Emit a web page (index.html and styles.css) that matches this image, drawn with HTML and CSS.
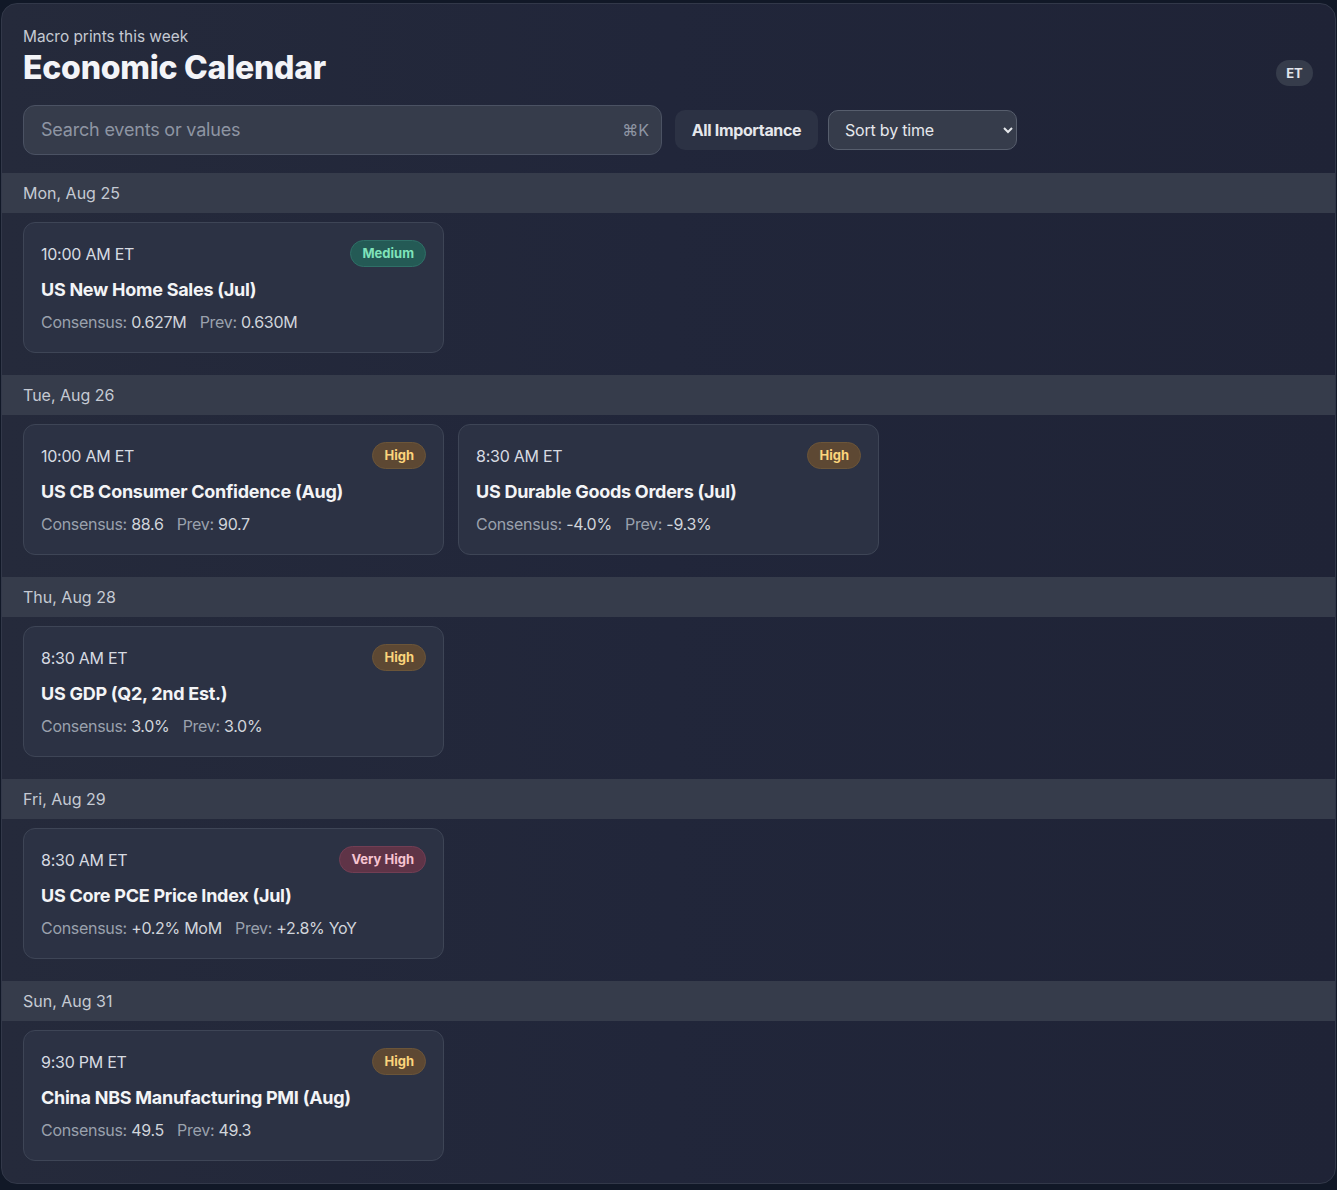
FILE: index.html
```html
<!DOCTYPE html>
<html lang="en">
<head>
<meta charset="utf-8">
<title>Economic Calendar</title>
<link rel="stylesheet" href="styles.css">
</head>
<body>
<div class="page">
  <main class="panel">
    <header class="head">
      <div class="titles">
        <div class="eyebrow">Macro prints this week</div>
        <h1 class="title">Economic Calendar</h1>
      </div>
      <span class="tz">ET</span>
    </header>
    <div class="toolbar">
      <label class="search">
        <input class="search-input" type="text" placeholder="Search events or values">
        <span class="kbd">⌘K</span>
      </label>
      <button class="btn">All Importance</button>
      <select class="sort">
        <option>Sort by time</option>
      </select>
    </div>

    <section class="day">
      <div class="day-head">Mon, Aug 25</div>
      <div class="cards">
        <article class="card">
          <div class="row"><span class="time">10:00 AM ET</span><span class="badge medium">Medium</span></div>
          <div class="name">US New Home Sales (Jul)</div>
          <div class="meta"><span class="lbl">Consensus:</span> 0.627M <span class="lbl sp">Prev:</span> 0.630M</div>
        </article>
      </div>
    </section>

    <section class="day">
      <div class="day-head">Tue, Aug 26</div>
      <div class="cards">
        <article class="card">
          <div class="row"><span class="time">10:00 AM ET</span><span class="badge high">High</span></div>
          <div class="name">US CB Consumer Confidence (Aug)</div>
          <div class="meta"><span class="lbl">Consensus:</span> 88.6 <span class="lbl sp">Prev:</span> 90.7</div>
        </article>
        <article class="card">
          <div class="row"><span class="time">8:30 AM ET</span><span class="badge high">High</span></div>
          <div class="name">US Durable Goods Orders (Jul)</div>
          <div class="meta"><span class="lbl">Consensus:</span> -4.0% <span class="lbl sp">Prev:</span> -9.3%</div>
        </article>
      </div>
    </section>

    <section class="day">
      <div class="day-head">Thu, Aug 28</div>
      <div class="cards">
        <article class="card">
          <div class="row"><span class="time">8:30 AM ET</span><span class="badge high">High</span></div>
          <div class="name">US GDP (Q2, 2nd Est.)</div>
          <div class="meta"><span class="lbl">Consensus:</span> 3.0% <span class="lbl sp">Prev:</span> 3.0%</div>
        </article>
      </div>
    </section>

    <section class="day">
      <div class="day-head">Fri, Aug 29</div>
      <div class="cards">
        <article class="card">
          <div class="row"><span class="time">8:30 AM ET</span><span class="badge vhigh">Very High</span></div>
          <div class="name">US Core PCE Price Index (Jul)</div>
          <div class="meta"><span class="lbl">Consensus:</span> +0.2% MoM <span class="lbl sp">Prev:</span> +2.8% YoY</div>
        </article>
      </div>
    </section>

    <section class="day">
      <div class="day-head">Sun, Aug 31</div>
      <div class="cards">
        <article class="card">
          <div class="row"><span class="time">9:30 PM ET</span><span class="badge high">High</span></div>
          <div class="name">China NBS Manufacturing PMI (Aug)</div>
          <div class="meta"><span class="lbl">Consensus:</span> 49.5 <span class="lbl sp">Prev:</span> 49.3</div>
        </article>
      </div>
    </section>
  </main>
</div>
</body>
</html>
```

FILE: styles.css
```css
* { box-sizing: border-box; }
html, body {
  margin: 0;
  background: #111827;
  font-family: Inter, "Noto Sans", "Liberation Sans", sans-serif;
  color: #e5e7eb;
}
.page {
  padding: 3px 1px 7px 1px;
}
.panel {
  background: linear-gradient(90deg, #252a3b 0%, #21263a 50%, #1f2336 100%);
  border: 1px solid #323849;
  border-radius: 16px;
  overflow: hidden;
}
.head {
  display: flex;
  justify-content: space-between;
  align-items: flex-end;
  padding: 24px 21px 0 21px;
}
.eyebrow {
  font-size: 15.4px;
  color: #c5cad3;
  line-height: 18px;
}
.title {
  margin: 3px 0 0 0;
  font-size: 32px;
  font-weight: 800;
  letter-spacing: -0.25px;
  color: #f3f4f8;
  line-height: 38px;
}
.tz {
  display: inline-block;
  background: #363c4b;
  color: #e2e5ec;
  font-size: 13px;
  font-weight: 700;
  padding: 5px 10px;
  width: 37px;
  text-align: center;
  border-radius: 14px;
  line-height: 16px;
  margin-bottom: 1px;
  margin-right: 1px;
}
.toolbar {
  display: flex;
  align-items: center;
  padding: 18px 21px 18px 21px;
}
.search {
  position: relative;
  display: block;
  flex: none;
  width: 639px;
  height: 50px;
  margin-right: 13px;
}
.search-input {
  width: 100%;
  height: 100%;
  background: #363c4b;
  border: 1px solid #4b5263;
  border-radius: 12px;
  padding: 0 60px 1px 17px;
  font-family: inherit;
  font-size: 18px;
  letter-spacing: -0.2px;
  color: #e5e7eb;
  outline: none;
}
.search-input::placeholder { color: #8e95a3; }
.kbd {
  position: absolute;
  right: 13px;
  top: 50%;
  transform: translateY(-52%);
  font-size: 16px;
  color: #8e95a3;
}
.btn {
  flex: none;
  width: 143px;
  height: 40px;
  padding: 0;
  background: #2c3244;
  border: none;
  border-radius: 10px;
  color: #e5e7eb;
  font-family: inherit;
  font-size: 16px;
  font-weight: 700;
  letter-spacing: -0.35px;
  margin-right: 10px;
}
.sort {
  width: 189px;
  height: 40px;
  background: #363c4b;
  border: 1px solid #575e6d;
  border-radius: 10px;
  color: #e5e7eb;
  font-family: inherit;
  font-size: 16px;
  letter-spacing: -0.2px;
  padding: 0 12px;
}
.day-head {
  background: #363c4b;
  height: 40px;
  line-height: 40px;
  padding: 0 21px;
  font-size: 16px;
  color: #c5cad3;
}
.cards {
  display: flex;
  gap: 14px;
  padding: 9px 22px 22px 21px;
}
.card {
  width: 421px;
  background: #2c3244;
  border: 1px solid #3e4556;
  border-radius: 12px;
  padding: 16px 17px 19px 17px;
}
.row {
  display: flex;
  justify-content: space-between;
  align-items: center;
  height: 29px;
}
.time {
  font-size: 16px;
  letter-spacing: -0.25px;
  color: #d7dbe2;
}
.badge {
  font-size: 13px;
  font-weight: 700;
  padding: 0 11px;
  line-height: 25px;
  border-radius: 14px;
  border: 1px solid transparent;
}
.medium { background: #245a55; color: #7fe3ba; border-color: #2f6f67; }
.high { background: #5d4833; color: #fcd57c; border-color: #6b5539; }
.vhigh { background: #5f3447; color: #f7c4d1; border-color: #723e54; }
.name {
  margin-top: 11px;
  font-size: 18px;
  font-weight: 700;
  letter-spacing: -0.27px;
  color: #f3f4f6;
  line-height: 22px;
}
.meta {
  margin-top: 10px;
  font-size: 16px;
  letter-spacing: -0.3px;
  color: #d1d5db;
  line-height: 22px;
}
.lbl { color: #9aa1ad; }
.sp { margin-left: 9px; }
```
